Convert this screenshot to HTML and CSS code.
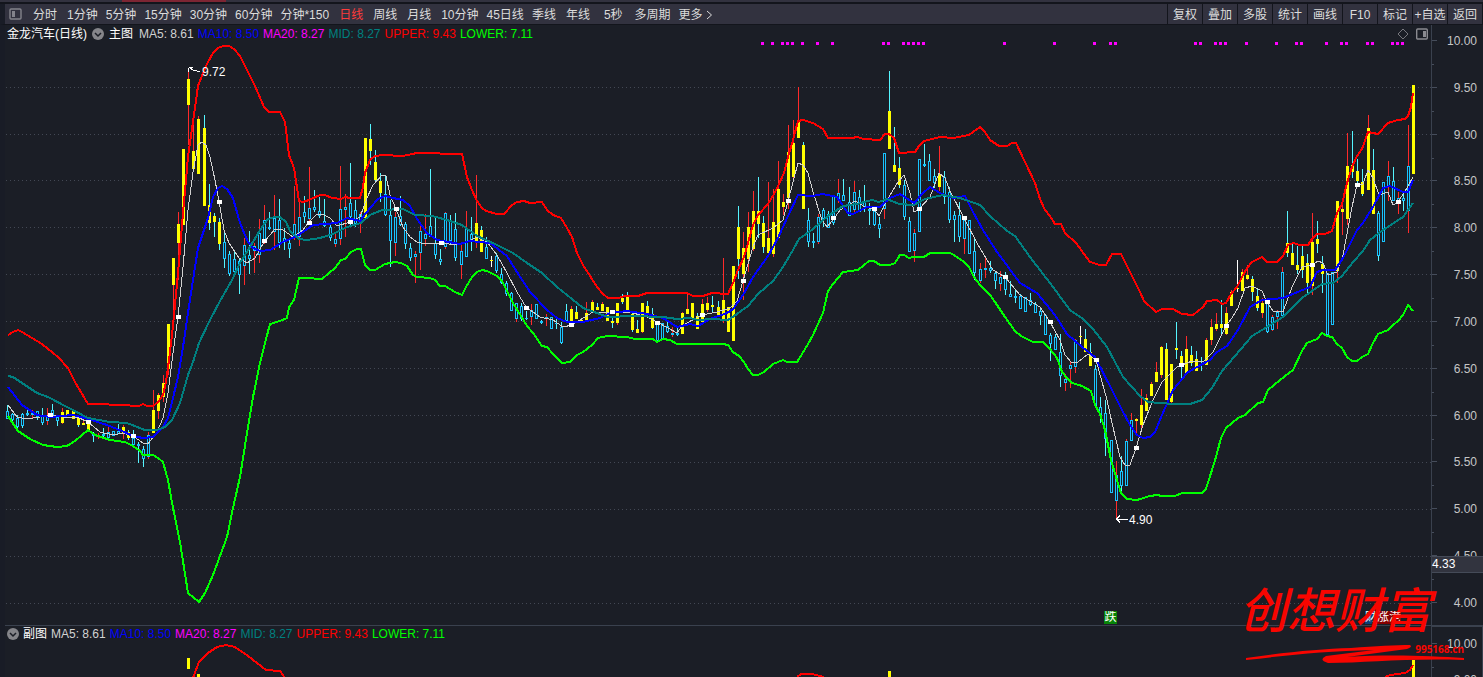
FILE: index.html
```html
<!DOCTYPE html>
<html lang="zh-CN">
<head>
<meta charset="utf-8">
<title>金龙汽车 日线</title>
<link rel="stylesheet" href="styles.css">
</head>
<body>
<div class="strip"><span class="strip-mark"></span></div>
<header class="toolbar">
  <button class="icon-btn" aria-label="侧栏"><svg width="13" height="12" viewBox="0 0 13 12"><rect x="1" y="1" width="11" height="10" rx="1" fill="none" stroke="#84848c" stroke-width="1.4"/><rect x="3" y="3" width="3" height="6" fill="#84848c"/></svg></button>
  <nav class="periods">
    <button>分时</button><button>1分钟</button><button>5分钟</button><button>15分钟</button><button>30分钟</button><button>60分钟</button><button>分钟*150</button><button class="active">日线</button><button>周线</button><button>月线</button><button>10分钟</button><button>45日线</button><button>季线</button><button>年线</button><button class="seconds">5秒</button><button>多周期</button><button class="more">更多<svg width="8" height="10" viewBox="0 0 8 10"><path d="M2 1L6.500 5L2 9" fill="none" stroke="#dcdcdc"/></svg></button>
  </nav>
  <div class="tools">
    <button>复权</button><button>叠加</button><button>多股</button><button>统计</button><button>画线</button><button>F10</button><button>标记</button><button>+自选</button><button>返回</button>
  </div>
</header>

<main class="workspace">
  <section class="panel main-panel">
    <div class="plot">
      <div class="legend">
        <span class="title">金龙汽车(日线)</span>
        <button class="icon-btn" aria-label="主图选项"><svg width="12" height="12" viewBox="0 0 12 12"><circle cx="6" cy="6" r="6" fill="#85858a"/><path d="M3 5L6 8L9 5" fill="none" stroke="#1b1e26" stroke-width="1.500"/></svg></button>
        <span class="title">主图</span>
        <span class="ma5">MA5: 8.61</span><span class="ma10">MA10: 8.50</span><span class="ma20">MA20: 8.27</span><span class="mid">MID: 8.27</span><span class="upper">UPPER: 9.43</span><span class="lower">LOWER: 7.11</span>
        <span class="legend-icons">
          <svg width="12" height="12" viewBox="0 0 12 12"><path d="M6 1L11 6L6 11L1 6Z" fill="none" stroke="#77777d"/></svg>
          <svg width="12" height="12" viewBox="0 0 12 12"><rect x=".7" y="1" width="10.600" height="10" rx="1" fill="none" stroke="#8a8a90" stroke-width="1.400"/><rect x="7" y="3" width="3" height="6" fill="#8a8a90"/></svg>
        </span>
      </div>
      <svg class="chart" viewBox="5 42 1426 583" preserveAspectRatio="none" role="img" aria-label="主图K线">
        <g id="grid"></g>
        <g id="signals" fill="#f0f"></g>
        <g id="candles"></g>
        <g id="lines" fill="none"></g>
        <g id="markers" fill="#fff"></g>
        <path d="M188.500 67.500H192.500M188.500 67.500V71.500M189 67.500L194 70.500L200 71.500M1116.500 519H1128M1120 515.500L1116.500 519L1120 522.500" fill="none" stroke="#fff"/>
        <text x="202" y="76">9.72</text>
        <text x="1129" y="524">4.90</text>
      </svg>
      <span class="tag fall">跌</span>
      <span class="tag-row"><span class="tag finance">财</span><span class="tag rise">涨</span><span class="tag rise">港</span></span>
    </div>
    <div class="axis">
      <ol><li>10.00</li><li>9.50</li><li>9.00</li><li>8.50</li><li>8.00</li><li>7.50</li><li>7.00</li><li>6.50</li><li>6.00</li><li>5.50</li><li>5.00</li><li>4.50</li><li>4.00</li></ol>
      <output class="cursor-price">4.33</output>
    </div>
  </section>
  <section class="panel sub-panel">
    <div class="plot">
      <div class="legend">
        <button class="icon-btn" aria-label="副图选项"><svg width="12" height="12" viewBox="0 0 12 12"><circle cx="6" cy="6" r="6" fill="#85858a"/><path d="M3 5L6 8L9 5" fill="none" stroke="#1b1e26" stroke-width="1.500"/></svg></button>
        <span class="title">副图</span>
        <span class="ma5">MA5: 8.61</span><span class="ma10">MA10: 8.50</span><span class="ma20">MA20: 8.27</span><span class="mid">MID: 8.27</span><span class="upper">UPPER: 9.43</span><span class="lower">LOWER: 7.11</span>
      </div>
      <svg class="chart" viewBox="5 642 1426 35" preserveAspectRatio="none" role="img" aria-label="副图">
        <path d="M187 658h3v11h-3zM197 674h3v3h-3zM888 671h3v6h-3zM1412 660h3v17h-3z" fill="#ff0"/>
        <path d="M193 678L199 662L208 653L217 647L226 645L235 647L248 656L266 670L280 671L285 678M797 677L801 674L812 674L824 677M1385 677L1390 675L1405 673L1410 670L1413 665" fill="none" stroke="#f00" stroke-width="2"/>
      </svg>
    </div>
    <div class="axis">
      <ol><li>10.00</li><li>9.00</li></ol>
    </div>
  </section>
  <div class="brand">
    <span class="brand-name">创想财富</span>
    <svg class="swoosh" width="220" height="20" viewBox="0 0 220 20"><path d="M0 15C40 9 75 6 105 5C130 3 150 2 164 2Q167 4 161 6L101 14C145 11 185 13 218 15V17C160 15 120 20 82 20Q72 17 80 13L128 7C80 8 45 12 0 17Z" fill="#f80500"/></svg>
    <span class="brand-url">995168.cn</span>
  </div>
</main>
<script src="chart.js"></script>
</body>
</html>
```

FILE: styles.css
```css
* { box-sizing: border-box; }
body {
  margin: 0;
  min-height: 100vh;
  display: flex;
  flex-direction: column;
  overflow: hidden;
  background: #1b1e26;
  color: #dcdcdc;
  font: 12px/14px "Liberation Sans", "Noto Sans CJK SC", sans-serif;
}
button {
  margin: 0;
  padding: 0;
  border: 0;
  background: none;
  color: inherit;
  font: inherit;
  white-space: nowrap;
}
svg { display: block; }
.icon-btn { flex: none; }
.strip { height: 4px; background: #32323f; border-bottom: 2px solid #13151c; }
.strip-mark { display: block; width: 104px; height: 2px; margin-left: 122px; background: #7d2533; }
.toolbar {
  display: flex;
  height: 21px;
  align-items: center;
  padding-left: 10px;
  background: #32323f;
  border-bottom: 1px solid #13151c;
  border-left: 5px solid #191c26;
}
.toolbar .icon-btn { margin-left: -6px; }
.periods { display: flex; gap: 8px; margin-left: 11px; }
.periods button { min-width: 26px; padding-top: 2px; text-align: left; }
.periods .active { margin-left: 2px; color: #ff3b3b; }
.periods .seconds { min-width: 0; margin: 0 4px; }
.periods .more { display: flex; align-items: center; gap: 2px; }
.tools {
  display: grid;
  grid-template-columns: repeat(9, 35px);
  align-self: stretch;
  margin-left: auto;
  border-right: 1px solid #13151c;
}
.tools button { padding-top: 2px; border-left: 1px solid #13151c; }
.workspace {
  position: relative;
  flex: 1;
  display: flex;
  flex-direction: column;
  border-left: 5px solid #191c26;
}
.panel { display: flex; }
.main-panel { flex: 1; border-bottom: 1px solid #3a414e; }
.sub-panel { height: 51px; overflow: hidden; }
.plot { position: relative; flex: 1; min-width: 0; display: flex; flex-direction: column; }
.legend { display: flex; flex: none; align-items: center; gap: 4px; height: 17px; padding-left: 2px; white-space: nowrap; }
.main-panel .icon-btn { margin: 0 1px; }
.sub-panel .legend { height: 16px; padding-left: 2px; }
.title { color: #fff; }
.ma5 { margin-left: 2px; color: #d2d2d2; }
.ma10 { color: #00f; }
.ma20 { color: #f0f; }
.mid { color: #008080; }
.upper { color: #f00; }
.lower { color: #0f0; }
.sub-panel .ma5 { margin-left: 0; }
.legend-icons { display: flex; gap: 7px; margin-left: auto; padding-right: 3px; }
.chart { flex: 1; width: 100%; min-height: 0; shape-rendering: crispEdges; }
.main-panel .chart { height: 0; }
.chart text { fill: #fff; }
.axis { position: relative; flex: none; width: 52px; border-left: 1px solid #3a414e; }
.axis ol {
  display: flex;
  flex-direction: column;
  justify-content: space-between;
  height: 100%;
  margin: 0;
  padding: 9px 6px 15px 0;
  list-style: none;
  text-align: right;
}
.axis li { position: relative; height: 14px; color: #c6c6c6; }
.axis li::before, .axis li::after { content: ""; position: absolute; left: 0; top: 6px; width: 5px; height: 1px; background: #464d5b; }
.axis li::after { top: 30px; width: 2px; }
.sub-panel .axis { border: 1px solid #3a414e; border-bottom: 0; }
.sub-panel .axis ol { justify-content: flex-start; gap: 22px; padding: 10px 5px 0 0; }
.cursor-price {
  position: absolute;
  right: 0;
  bottom: 52px;
  left: 0;
  height: 17px;
  background: #32343f;
  border: solid #454b58;
  border-width: 1px 0;
  color: #fff;
}
.tag { width: 13px; height: 13px; color: #fff; line-height: 13px; text-align: center; overflow: hidden; }
.fall { position: absolute; right: 314px; bottom: 1px; background: #078407; }
.tag-row { position: absolute; right: 30px; bottom: 1px; display: flex; }
.tag-row .tag { width: 12px; }
.finance { background: #0c3f78; }
.rise { background: #850000; }
.brand { position: absolute; right: 19px; bottom: 13px; width: 220px; height: 82px; color: #f80500; pointer-events: none; }
.brand-name { position: absolute; left: -5px; top: 1px; font: italic 500 48px/48px "Noto Sans CJK SC", sans-serif; white-space: nowrap; }
.swoosh { position: absolute; left: 2px; bottom: 1px; }
.brand-url { position: absolute; right: 0; bottom: 9px; font: 700 10px/12px "Noto Sans", sans-serif; }
```

FILE: chart.js
```js
// Candle rows: x, high, body top, body bottom, low, kind.
// C/R: hollow body with cyan/red wick; y/Y: filled body with cyan/red wick; W: doji.
const candles = `7 405 411 419 419 C;12 413 414 420 423 C;17 415 418 427 428 C;22 413 414 426 428 C;27 408 413 415 416 C;32 410 413 415 419 R;37 411 411 417 420 C;42 408 416 423 425 C;47 408 415 421 425 R;52 404 410 417 417 C;57 417 417 421 426 C;62 408 412 423 424 Y;67 410 410 416 416 Y;73 410 410 419 419 Y;78 417 418 425 427 y;83 420 423 425 425 Y;88 420 422 430 430 Y;93 432 434 436 442 C;98 433 436 437 439 R;103 428 434 436 438 C;108 427 432 438 439 R;113 431 431 436 436 C;118 424 431 434 434 C;123 425 427 434 439 Y;128 430 432 438 440 y;133 430 438 445 446 C;138 442 444 446 463 C;143 446 449 459 467 C;148 432 435 457 459 R;153 390 410 433 433 Y;158 393 395 411 419 Y;163 375 383 397 402 Y;168 324 324 369 375 Y;173 258 258 285 310 Y;178 212 224 243 280 Y;183 149 149 225 225 Y;188 69 79 105 145 Y;193 120 151 169 172 Y;198 116 119 174 174 Y;204 115 128 206 206 y;209 184 205 223 230 y;214 213 216 222 237 y;219 218 222 244 250 y;224 232 242 259 268 C;229 251 254 274 276 C;234 250 259 272 275 C;239 258 261 275 294 C;244 238 245 266 285 R;249 231 255 259 274 C;254 243 246 251 273 R;259 219 233 255 263 R;264 205 220 242 244 R;269 212 227 229 230 C;274 195 218 232 250 R;279 199 220 243 248 C;284 228 238 241 250 C;289 240 243 249 258 C;294 186 224 238 240 R;299 199 217 237 246 R;304 196 212 217 223 C;309 167 208 219 222 R;314 190 207 210 212 C;319 197 211 216 218 C;324 199 221 226 227 C;330 225 227 238 241 C;335 233 239 244 247 R;340 166 209 239 245 R;345 194 207 210 237 R;350 163 203 217 225 C;355 200 210 224 227 C;360 212 214 221 233 R;365 138 138 218 218 Y;370 124 139 151 165 y;375 150 162 180 183 y;380 173 181 193 202 y;385 175 194 215 216 C;390 200 215 241 267 C;395 212 217 243 256 R;400 196 216 225 226 C;405 222 224 244 249 C;410 243 248 258 261 C;415 251 254 257 283 R;420 225 231 253 270 R;425 214 234 239 246 R;430 169 226 237 237 C;435 218 243 255 259 C;440 249 259 262 265 C;445 212 213 247 249 R;450 215 221 241 245 C;455 213 229 258 261 C;461 245 251 265 279 R;466 211 229 257 257 R;471 217 234 240 251 C;476 175 223 242 248 Y;481 226 230 252 252 y;486 237 247 259 259 C;491 256 260 261 267 W;496 253 256 271 273 C;501 268 274 283 284 C;506 281 283 294 296 C;511 292 293 311 311 C;516 303 303 319 322 R;521 303 306 319 321 C;526 311 318 319 320 C;531 304 310 317 325 R;536 304 304 319 319 C;541 320 321 323 324 C;546 314 317 319 326 R;551 317 317 329 329 C;556 318 323 324 329 C;561 322 327 343 344 C;566 304 311 321 321 C;571 306 309 321 321 Y;576 306 312 319 319 y;581 318 320 322 322 Y;586 302 313 320 320 Y;592 300 302 311 311 Y;597 303 307 310 310 y;602 302 304 311 311 Y;607 307 307 321 321 Y;612 318 321 323 328 y;617 303 303 323 325 Y;622 294 298 302 304 y;627 292 297 313 313 y;632 312 314 330 332 y;637 320 329 333 333 y;642 303 303 332 333 Y;647 301 306 313 313 y;652 308 314 328 329 y;657 323 323 341 341 C;662 323 323 339 339 C;667 320 326 332 333 C;672 327 333 335 337 R;677 327 333 335 336 C;682 312 313 334 334 Y;687 293 309 314 314 Y;692 303 303 318 318 Y;697 313 316 329 329 y;702 299 304 322 322 Y;707 297 303 310 312 Y;712 296 305 307 313 y;718 301 307 315 315 y;723 258 300 321 323 Y;728 307 307 332 332 y;733 266 266 341 341 Y;738 206 227 259 279 y;743 232 248 274 300 Y;748 212 227 259 272 Y;753 191 211 249 251 Y;758 177 211 224 238 y;763 216 223 247 253 y;768 182 238 253 253 Y;773 189 222 254 257 Y;778 161 189 238 238 Y;783 194 202 207 215 Y;788 125 152 198 209 Y;793 120 143 177 179 Y;798 87 121 138 138 Y;803 142 145 209 209 y;808 208 220 242 247 C;813 233 241 243 248 C;818 214 217 242 244 R;823 208 210 219 227 C;828 211 214 228 228 C;833 195 195 223 225 C;838 179 193 199 203 R;843 179 195 201 201 C;849 187 202 216 216 C;854 181 192 210 212 R;859 190 197 212 212 C;864 185 201 207 212 C;869 203 209 211 225 C;874 208 211 225 226 C;879 217 224 229 238 C;884 153 153 209 219 R;889 71 111 149 149 y;894 127 165 172 172 y;899 157 168 185 188 y;904 180 185 217 220 C;909 217 221 252 252 C;914 229 233 251 262 R;919 159 159 232 232 C;924 144 164 166 167 C;929 154 161 181 181 C;934 169 176 183 188 C;939 146 174 187 191 Y;944 171 177 197 204 C;949 187 192 220 223 C;954 211 215 220 242 C;959 202 215 237 242 C;964 217 220 239 254 R;969 220 220 254 254 C;974 239 251 273 280 C;980 263 269 281 283 R;985 258 268 270 278 R;990 261 268 271 273 C;995 271 273 281 289 C;1000 271 277 284 291 R;1005 272 278 290 295 C;1010 281 294 297 297 C;1015 289 296 298 303 C;1020 294 296 309 309 C;1025 297 297 312 312 C;1030 293 300 305 306 C;1035 302 304 313 313 C;1040 307 311 316 325 C;1045 315 315 335 335 C;1050 333 335 344 361 C;1055 334 337 350 350 C;1060 334 352 376 387 C;1065 374 379 383 391 R;1070 362 365 369 388 R;1075 339 340 367 373 R;1080 326 336 337 344 W;1085 329 339 352 352 y;1090 343 352 366 366 y;1095 365 369 406 406 C;1100 397 407 415 423 C;1105 400 413 439 456 C;1111 440 440 493 493 C;1116 461 475 501 518 R;1121 456 471 486 491 C;1126 439 441 486 486 R;1131 413 420 441 441 R;1136 418 419 421 433 Y;1141 389 405 425 428 Y;1146 394 398 411 411 Y;1151 382 384 396 396 Y;1156 362 372 382 382 Y;1161 346 347 375 378 Y;1166 343 349 400 400 y;1171 364 364 402 405 Y;1176 322 348 350 359 y;1181 351 356 365 379 y;1186 336 349 373 373 Y;1191 346 355 363 366 y;1196 351 359 371 371 y;1201 357 364 365 371 y;1206 338 340 365 365 Y;1211 319 327 340 345 Y;1216 313 324 329 331 Y;1221 300 324 328 334 y;1226 307 313 334 335 Y;1231 290 292 306 306 Y;1237 260 288 289 292 W;1242 269 272 291 291 Y;1247 265 275 279 280 Y;1252 276 279 292 301 y;1257 289 296 308 311 y;1262 298 303 313 318 Y;1267 302 303 332 333 C;1272 315 317 330 331 R;1277 310 312 317 329 R;1282 267 272 316 316 R;1287 211 243 253 257 y;1292 243 253 265 265 y;1297 246 265 270 274 y;1302 246 256 270 278 y;1307 254 263 283 293 y;1312 213 242 286 295 Y;1317 221 239 244 253 y;1322 256 264 274 293 y;1327 273 273 335 335 C;1332 272 272 325 325 C;1337 201 201 271 283 Y;1342 203 209 212 235 Y;1347 133 166 219 225 Y;1352 131 165 172 178 y;1357 159 171 181 186 y;1362 169 182 194 196 y;1368 115 128 190 190 Y;1373 149 170 214 214 y;1378 211 213 256 261 C;1383 182 182 242 242 C;1388 161 176 186 201 R;1393 167 181 201 201 C;1398 192 198 203 214 R;1403 193 198 201 211 C;1408 125 166 211 233 R;1413 85 85 174 174 Y`;

const series = [
  { color: "#d0d0d0", width: 1, points: "8,405 17,417 27,419 40,417 50,415 63,417 77,417 88,422 100,432 113,435 123,433 133,436 143,443 148,444 157,432 163,418 168,393 173,353 178,317 183,267 188,210 193,172 198,145 202,142 206,145 210,157 215,180 220,207 224,230 229,243 239,258 247,263 255,258 264,242 275,229 283,230 293,237 303,230 309,222 317,214 322,214 330,218 337,226 350,222 360,217 367,198 373,185 382,175 386,176 390,195 396,209 403,227 410,237 417,242 425,244 440,243 458,245 467,242 477,237 488,243 497,255 507,273 517,292 526,307 540,317 553,320 563,327 572,325 580,320 593,312 612,312 633,313 647,317 657,322 668,328 677,333 683,325 702,315 717,312 730,308 737,301 743,281 753,247 758,235 773,228 783,220 788,201 793,182 798,163 803,165 808,173 813,192 822,220 827,227 833,220 840,210 855,201 865,207 874,209 879,216 887,200 898,182 904,175 910,193 914,212 919,209 930,197 939,173 945,178 950,191 964,218 977,243 993,270 1005,277 1020,295 1040,307 1050,322 1060,340 1065,355 1072,363 1078,362 1088,354 1096,360 1107,400 1112,423 1120,457 1125,465 1130,465 1136,448 1143,425 1153,400 1162,382 1177,367 1182,365 1192,361 1203,362 1213,352 1220,338 1226,326 1232,318 1238,308 1245,288 1252,286 1262,291 1267,302 1273,311 1283,312 1292,287 1302,267 1312,265 1318,261 1323,263 1328,275 1337,272 1343,255 1352,207 1357,185 1363,184 1368,170 1373,178 1379,195 1388,192 1393,205 1398,202 1407,188 1413,177" },
  { color: "#00f", width: 2, points: "8,387 22,405 37,415 50,417 73,415 88,419 107,425 122,431 133,436 143,438 153,437 163,427 168,418 173,398 178,377 183,347 188,313 193,280 198,248 208,218 213,197 218,188 222,186 227,189 233,198 240,223 248,242 253,248 260,251 270,250 283,242 297,236 313,225 337,223 347,218 360,221 370,208 378,199 385,196 393,198 403,200 410,206 417,219 427,233 437,240 460,244 470,241 490,243 507,256 517,272 530,292 547,310 557,318 567,322 583,322 600,318 610,313 627,311 647,314 663,318 677,327 690,324 698,326 710,319 727,313 733,309 743,295 753,277 768,256 778,238 788,216 798,195 812,196 823,194 837,197 848,213 853,214 867,207 880,207 890,198 900,194 914,203 923,193 930,187 940,193 953,198 965,196 973,212 983,230 997,252 1020,283 1037,293 1055,315 1067,334 1082,347 1095,357 1112,390 1122,410 1130,425 1137,435 1143,438 1150,437 1155,432 1162,415 1173,390 1187,373 1195,368 1210,360 1217,352 1227,346 1238,330 1250,307 1262,300 1283,298 1300,291 1310,287 1317,272 1323,270 1335,270 1343,258 1357,230 1363,223 1373,207 1383,188 1390,186 1403,192 1408,192 1413,180" },
  { color: "#008080", width: 2, points: "8,376 13,377 37,393 48,397 67,407 88,418 110,422 127,423 145,430 157,430 165,427 172,420 180,403 188,375 193,362 199,343 210,320 220,301 232,280 240,263 250,247 260,230 268,219 275,217 280,217 286,222 290,231 299,239 307,240 320,238 333,234 347,227 361,223 370,215 382,210 403,209 415,215 432,216 447,220 462,225 477,236 495,244 513,253 527,263 542,273 557,287 572,299 583,308 597,313 608,317 633,316 663,317 677,319 690,318 698,320 712,319 728,320 737,314 748,306 758,294 773,281 783,267 793,250 799,239 813,229 828,216 843,206 857,204 872,200 879,202 887,199 899,204 914,205 925,199 943,195 960,198 980,205 990,216 1007,231 1015,236 1030,257 1050,283 1070,310 1083,319 1093,329 1107,347 1123,377 1140,396 1148,402 1173,404 1190,404 1202,400 1212,388 1222,371 1235,356 1252,336 1267,327 1283,317 1302,298 1322,284 1333,283 1342,276 1353,262 1363,251 1370,240 1383,230 1403,217 1413,203" },
  { color: "#f00", width: 2, points: "8,335 13,332 18,330 22,332 42,344 58,357 68,368 75,382 88,404 98,404 120,405 139,406 143,404 147,406 153,406 158,402 163,395 166,382 169,360 172,335 174,315 178,273 183,213 188,157 193,122 198,86 203,73 208,62 213,53 218,48 223,46 229,46 234,49 240,56 245,66 255,86 264,107 269,112 280,112 285,122 289,155 294,168 299,201 303,202 309,200 320,195 325,195 332,198 341,199 345,197 350,198 360,198 363,187 365,173 370,160 375,156 383,155 403,156 417,153 462,154 467,177 472,190 477,201 482,208 486,211 497,214 504,214 512,205 517,202 524,201 530,203 542,202 547,210 553,215 561,218 567,228 572,237 577,253 583,265 592,279 597,287 603,294 608,298 618,298 625,296 638,296 647,293 677,293 687,293 693,296 703,296 712,293 728,294 733,283 738,270 744,257 748,243 753,225 758,215 768,204 774,194 779,184 784,173 788,157 793,140 798,121 803,120 813,123 823,129 828,138 852,138 857,137 864,139 880,140 885,134 889,134 894,138 899,153 915,152 919,146 924,141 940,137 953,138 969,135 980,127 985,132 990,140 999,146 1007,146 1012,143 1016,143 1025,162 1035,183 1040,199 1045,210 1050,216 1055,224 1061,224 1065,233 1076,243 1090,262 1100,265 1106,265 1112,254 1121,254 1140,292 1144,301 1156,312 1162,309 1173,309 1182,314 1193,315 1203,307 1207,301 1217,300 1222,304 1226,303 1231,294 1237,287 1242,277 1247,268 1252,262 1262,257 1267,262 1277,262 1283,256 1288,245 1293,243 1300,245 1308,245 1312,239 1317,234 1325,234 1332,231 1337,213 1342,204 1347,183 1352,167 1357,156 1362,149 1368,132 1378,134 1388,123 1398,120 1405,119 1408,116 1411,107 1413,93" },
  { color: "#0f0", width: 2, points: "8,416 18,431 30,439 43,445 57,447 67,446 75,441 88,430 95,435 110,440 125,442 133,446 140,451 143,455 153,455 158,458 163,462 168,480 173,508 180,542 188,593 199,602 205,593 213,575 227,537 233,508 240,477 247,433 253,397 260,363 265,343 270,324 280,321 287,318 289,307 294,300 299,278 305,278 322,279 335,268 341,260 345,259 351,252 357,249 361,249 365,265 370,270 375,270 385,264 395,262 401,263 407,266 413,275 417,277 430,278 435,280 440,286 445,286 455,292 462,295 466,287 472,277 477,272 482,270 487,271 497,276 502,281 507,291 513,303 518,311 527,326 533,333 542,346 547,347 553,354 562,363 570,362 577,355 583,352 592,345 598,338 607,336 627,337 635,339 653,339 657,342 663,339 670,340 677,344 723,344 728,345 733,352 739,356 744,362 748,369 753,375 758,375 764,372 773,364 783,360 787,362 797,362 799,359 808,344 813,335 823,313 828,291 833,284 843,272 858,270 869,261 874,261 880,265 890,265 895,263 900,255 904,255 909,258 913,257 924,257 930,253 950,253 954,255 964,262 969,267 974,277 980,285 990,295 995,302 1005,317 1015,331 1021,336 1033,342 1043,342 1050,349 1057,358 1062,372 1067,378 1072,383 1082,386 1091,391 1095,405 1100,414 1105,430 1111,460 1116,477 1121,493 1127,499 1137,500 1150,496 1157,495 1162,496 1175,496 1182,493 1202,493 1206,489 1211,473 1216,457 1221,438 1226,428 1238,418 1245,415 1258,403 1263,402 1268,390 1280,380 1293,370 1302,351 1307,343 1317,339 1322,333 1327,336 1332,337 1337,344 1342,348 1347,357 1352,361 1357,361 1362,357 1368,354 1373,343 1378,334 1388,330 1393,325 1398,321 1403,315 1408,305 1413,311" }
];

const markers = "50,415 88,422 133,436 178,317 219,202 264,241 309,223 350,222 396,209 441,243 526,308 571,325 612,312 657,323 702,315 743,281 788,201 833,218 874,209 919,209 964,218 1005,277 1050,322 1096,360 1136,448 1181,365 1226,326 1267,302 1312,265 1357,185 1398,202";
const signals = [762, 772, 782, 787, 792, 802, 817, 832, 883, 888, 903, 908, 913, 918, 923, 1004, 1054, 1094, 1110, 1115, 1195, 1200, 1215, 1220, 1225, 1246, 1276, 1296, 1301, 1326, 1341, 1346, 1367, 1372, 1392, 1397, 1402];
const gridRows = [87, 134, 180, 227, 274, 321, 368, 415, 462, 509, 556, 603];

function add(parentId, name, attrs) {
  const el = document.createElementNS("http://www.w3.org/2000/svg", name);
  for (const key in attrs) el.setAttribute(key, attrs[key]);
  document.getElementById(parentId).appendChild(el);
}
function box(parentId, x, y, width, height, fill) {
  add(parentId, "rect", { x, y, width, height, fill });
}

gridRows.forEach(y => add("grid", "path", { d: `M6 ${y + 0.5}H1431`, stroke: "#434854", "stroke-dasharray": "1 3" }));
signals.forEach(x => box("signals", x - 1, 42, 3, 3, "#f0f"));

candles.split(";").forEach(row => {
  const parts = row.split(" ");
  const [x, high, top, bottom, low] = parts.map(Number);
  const kind = parts[5];
  const wick = kind === "W" ? "#fff" : "RY".includes(kind) ? "#ff2a2a" : "#55f5ff";
  box("candles", x, high, 1, low - high, wick);
  if (kind === "W") {
    box("candles", x - 1, top, 3, 1, "#ff0");
  } else if (kind === "Y" || kind === "y") {
    box("candles", x - 1, top, 3, bottom - top, "#ff0");
  } else {
    box("candles", x - 1, top, 3, bottom - top, "#18c4ff");
    if (bottom - top > 2) box("candles", x, top + 1, 1, bottom - top - 2, "#1b1e26");
  }
});

series.forEach(s => add("lines", "polyline", { points: s.points, stroke: s.color, "stroke-width": s.width }));
markers.split(" ").forEach(p => {
  const [x, y] = p.split(",").map(Number);
  box("markers", x - 2, y - 2, 5, 4, "#fff");
});
```
